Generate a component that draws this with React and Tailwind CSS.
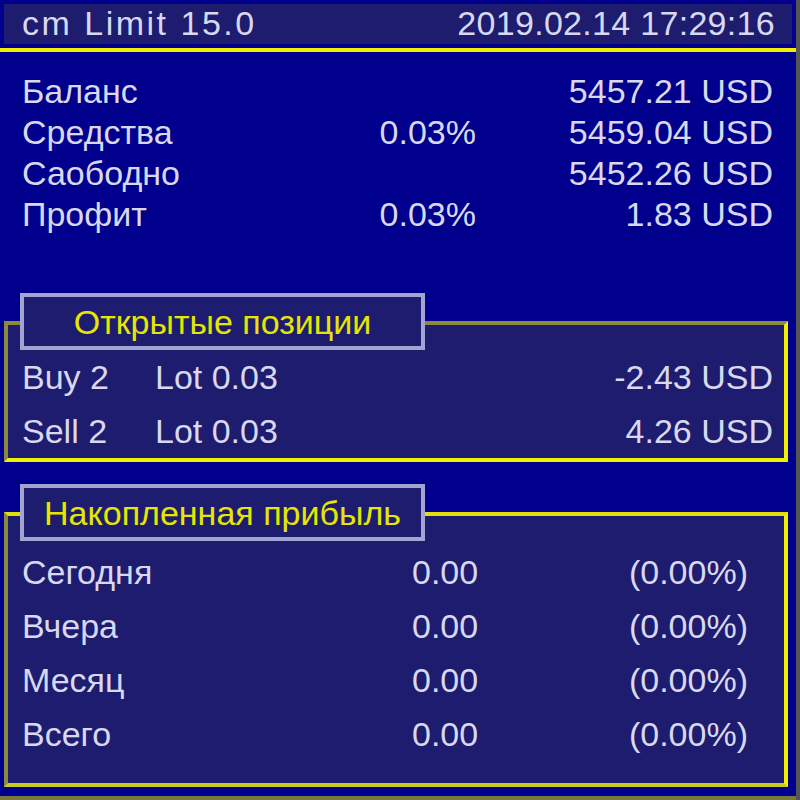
import React from 'react';

const stats = [
  { label: 'Баланс', pct: '', value: '5457.21 USD' },
  { label: 'Средства', pct: '0.03%', value: '5459.04 USD' },
  { label: 'Саободно', pct: '', value: '5452.26 USD' },
  { label: 'Профит', pct: '0.03%', value: '1.83 USD' },
];

const positions = [
  { side: 'Buy 2', lot: 'Lot 0.03', value: '-2.43 USD' },
  { side: 'Sell 2', lot: 'Lot 0.03', value: '4.26 USD' },
];

const profits = [
  { label: 'Сегодня', value: '0.00', pct: '(0.00%)' },
  { label: 'Вчера', value: '0.00', pct: '(0.00%)' },
  { label: 'Месяц', value: '0.00', pct: '(0.00%)' },
  { label: 'Всего', value: '0.00', pct: '(0.00%)' },
];

function SectionTitle({ children }) {
  return (
    <div className="absolute left-[12px] top-[-32px] w-[405px] h-[57px] border-4 border-[#a4a4d4] bg-[#1e1c6e] flex items-center justify-center text-[#e6e600]">
      {children}
    </div>
  );
}

export default function App() {
  return (
    <div
      className="w-[800px] h-[800px] bg-[#00008c] border-r-4 border-[#555555] text-[#d8d8f0] text-[34px] leading-none flex flex-col relative"
      style={{ fontFamily: '"Liberation Sans", Arial, sans-serif' }}
    >
      {/* Header */}
      <div className="mt-1 mx-1 h-10 bg-[#1e1c6e] flex items-center justify-between pl-[18px] pr-[17px] pb-[3px]">
        <span className="tracking-[2.5px]">cm Limit 15.0</span>
        <span className="tracking-[0.3px]">2019.02.14 17:29:16</span>
      </div>
      <div className="mt-1 h-1 bg-[#f0f000]" />

      {/* Account stats */}
      <div className="pt-[18px] pl-[22px] pr-[23px]">
        {stats.map((row) => (
          <div key={row.label} className="h-[41px] grid grid-cols-[330px_124px_1fr] items-center">
            <span>{row.label}</span>
            <span className="text-right">{row.pct}</span>
            <span className="text-right">{row.value}</span>
          </div>
        ))}
      </div>

      {/* Open positions */}
      <div className="relative mt-[87px] ml-1 mr-2 border-4 border-t-[#8a8a3a] border-l-[#8a8a3a] border-r-[#f0f000] border-b-[#f0f000] bg-[#1e1c6e] pt-[25px] pl-[14px] pr-[11px]">
        <SectionTitle>Открытые позиции</SectionTitle>
        {positions.map((row) => (
          <div key={row.side} className="h-[54px] flex items-center">
            <span className="w-[133px]">{row.side}</span>
            <span>{row.lot}</span>
            <span className="ml-auto">{row.value}</span>
          </div>
        ))}
      </div>

      {/* Accumulated profit */}
      <div className="relative mt-[50px] ml-1 mr-2 border-4 border-t-[#e0e010] border-l-[#8a8a3a] border-r-[#f0f000] border-b-[#c8c820] bg-[#1e1c6e] pt-[29px] pb-[22px] pl-[14px]">
        <SectionTitle>Накопленная прибыль</SectionTitle>
        {profits.map((row) => (
          <div key={row.label} className="h-[54px] grid grid-cols-[390px_66px_270px] items-center">
            <span>{row.label}</span>
            <span className="text-right">{row.value}</span>
            <span className="text-right">{row.pct}</span>
          </div>
        ))}
      </div>

      <div className="mt-auto h-1 bg-[#78783c]" />
    </div>
  );
}
